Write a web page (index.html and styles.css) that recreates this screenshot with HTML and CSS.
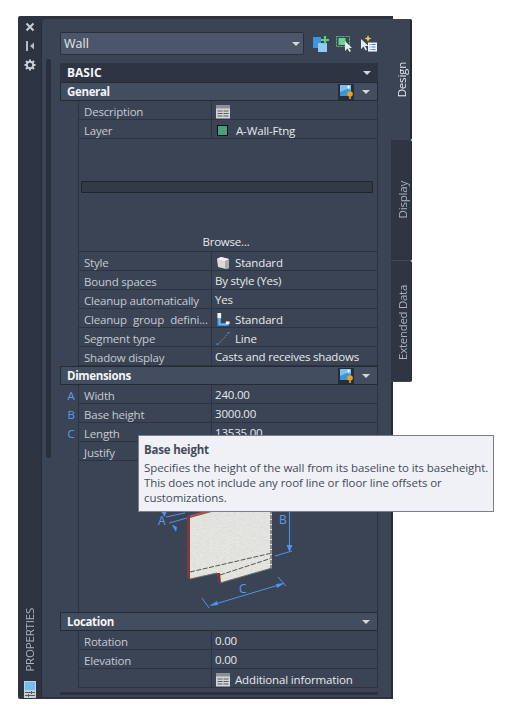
FILE: index.html
```html
<!DOCTYPE html>
<html lang="en">
<head>
  <meta charset="UTF-8" />
  <title>Properties</title>
  <link rel="stylesheet" href="styles.css">
</head>
<body>
  <div class="window">
    <div class="palette">
      <div class="titlebar">
        <svg class="tool" viewBox="0 0 12 12"><path d="M2.500 2.500l7 7M9.500 2.500l-7 7" stroke="#c9ced5" stroke-width="2"/></svg>
        <svg class="tool" viewBox="0 0 12 12"><path d="M3 1v10" stroke="#b4bbc5" stroke-width="2"/><path d="M10 2.500v7l-4-3.500z" fill="#b4bbc5"/></svg>
        <svg class="tool" viewBox="0 0 12 12"><circle cx="6" cy="6" r="3.200" fill="none" stroke="#c9ced5" stroke-width="2"/><path d="M6 .5v2M6 9.500v2M.5 6h2M9.500 6h2M2 2l1.500 1.500M10 2L8.500 3.500M2 10l1.500-1.500M10 10L8.500 8.500" stroke="#c9ced5" stroke-width="2"/></svg>
        <div class="title-name">PROPERTIES</div>
        <svg class="palette-icon" viewBox="0 0 12 17">
          <rect width="12" height="17" fill="#c9ced4"/>
          <rect x="1" y="1" width="10" height="8" fill="#6cc0f5"/>
          <path d="M1 11.500h10M1 14.500h10" stroke="#555c66"/>
          <path d="M7.500 10v3M4.500 13v3" stroke="#555c66"/>
        </svg>
      </div>

      <div class="panel">
        <div class="scrollbar-v"></div>
        <div class="content">
          <div class="toolbar">
            <div class="combo">
              <span>Wall</span>
              <i class="arrow"></i>
            </div>
            <div class="toolbar-icons">
              <svg width="18" height="18" viewBox="0 0 18 18">
                <rect x="1" y="2" width="8" height="11" fill="#3f94dc"/>
                <rect x="6" y="8" width="9" height="9" fill="#90caf6"/>
                <path d="M13 1v8M9 5h8" stroke="#5bd07e" stroke-width="2.200"/>
              </svg>
              <svg width="18" height="18" viewBox="0 0 18 18">
                <rect x=".5" y="1.500" width="13" height="10" fill="none" stroke="#52c878" stroke-dasharray="2 1"/>
                <rect x="2.500" y="3" width="7" height="7" fill="#6ed093"/>
                <path d="M9 6v10l2.500-2.500 2 3.500 1.500-1-2-3h3z" fill="#e8ebee"/>
              </svg>
              <svg width="18" height="18" viewBox="0 0 18 18">
                <path d="M1 4v10l2.500-2.500 2 4 1.500-1-2-3.500h3.500z" fill="#e8ebee"/>
                <path d="M8 0l1 2.500 2.500 1-2.500 1-1 2.500-1-2.500-2.500-1 2.500-1z" fill="#f4c35c"/>
                <rect x="8" y="7.500" width="9" height="9" fill="#f2f4f6"/>
                <path d="M9.500 9.500h1M9.500 12h1M9.500 14.500h1M11.500 9.500h4M11.500 12h4M11.500 14.500h4" stroke="#2f86d4"/>
              </svg>
            </div>
          </div>

          <div class="group-head">BASIC<i class="arrow"></i></div>
          <div class="section-head">
            General
            <svg class="qs" viewBox="0 0 16 16"><rect width="16" height="16" fill="#282e39"/><rect x="2" y="1" width="11" height="11" fill="#3d92d8"/><path d="M2 1h11v5l-4-1-7 3z" fill="#7cc0f0"/><path d="M9 3h3M10.500 1.500v3" stroke="#fff"/><circle cx="12" cy="10" r="2.800" fill="#f0a020"/><rect x="11" y="12" width="2" height="3" fill="#c98a20"/></svg>
            <i class="arrow"></i>
          </div>
          <div class="row">
            <span class="gutter"></span><span class="label">Description</span>
            <span class="value">
              <svg class="cell-icon" viewBox="0 0 14 13"><rect width="14" height="13" fill="#d3d5d6"/><rect width="14" height="3" fill="#8d9196"/><path d="M1.500 5.500h5M7.500 5.500h5M1.500 8h5M7.500 8h5M1.500 10.500h5M7.500 10.500h5" stroke="#555a61"/></svg>
            </span>
          </div>
          <div class="row">
            <span class="gutter"></span><span class="label">Layer</span>
            <span class="value"><i class="swatch"></i>A-Wall-Ftng</span>
          </div>
          <div class="row graphic-row">
            <span class="gutter"></span>
            <div class="graphic-cell">
              <div class="graphic-bar"></div>
              <div class="browse">Browse...</div>
            </div>
          </div>
          <div class="row">
            <span class="gutter"></span><span class="label">Style</span>
            <span class="value">
              <svg class="cell-icon" viewBox="0 0 14 14"><path d="M1 3l4-2 8 2v9l-3 1-8-2z" fill="#d9dad8"/><path d="M1 3l8 2 4-2-8-2z" fill="#f2f2f0"/><path d="M9 5v8l4-1V3z" fill="#a9acae"/></svg>
              Standard
            </span>
          </div>
          <div class="row">
            <span class="gutter"></span><span class="label">Bound spaces</span>
            <span class="value plain">By style (Yes)</span>
          </div>
          <div class="row">
            <span class="gutter"></span><span class="label">Cleanup automatically</span>
            <span class="value plain">Yes</span>
          </div>
          <div class="row">
            <span class="gutter"></span><span class="label label-wide">Cleanup group defini...</span>
            <span class="value">
              <svg class="cell-icon" viewBox="0 0 14 15"><rect x="1" y="0" width="4" height="6" fill="#f2f4f6"/><path d="M1 6h4v5h8v3H1z" fill="#3b94de"/><path d="M3 6v6h9" stroke="#8cc8f4" fill="none"/><rect x="10" y="9" width="4" height="3" fill="#f2f4f6"/></svg>
              Standard
            </span>
          </div>
          <div class="row">
            <span class="gutter"></span><span class="label">Segment type</span>
            <span class="value">
              <svg class="cell-icon" viewBox="0 0 14 15"><path d="M1.500 13.500l11-12" stroke="#7d8794" stroke-dasharray="2 1"/><rect y="12" width="2" height="2" fill="#2e86de"/><rect x="12" y="0" width="2" height="2" fill="#2e86de"/></svg>
              Line
            </span>
          </div>
          <div class="row">
            <span class="gutter"></span><span class="label">Shadow display</span>
            <span class="value plain">Casts and receives shadows</span>
          </div>

          <div class="section-head">
            Dimensions
            <svg class="qs" viewBox="0 0 16 16"><rect width="16" height="16" fill="#282e39"/><rect x="2" y="1" width="11" height="11" fill="#3d92d8"/><path d="M2 1h11v5l-4-1-7 3z" fill="#7cc0f0"/><path d="M9 3h3M10.500 1.500v3" stroke="#fff"/><circle cx="12" cy="10" r="2.800" fill="#f0a020"/><rect x="11" y="12" width="2" height="3" fill="#c98a20"/></svg>
            <i class="arrow"></i>
          </div>
          <div class="row">
            <span class="gutter">A</span><span class="label">Width</span>
            <span class="value plain">240.00</span>
          </div>
          <div class="row">
            <span class="gutter">B</span><span class="label">Base height</span>
            <span class="value plain">3000.00</span>
          </div>
          <div class="row">
            <span class="gutter">C</span><span class="label">Length</span>
            <span class="value plain">13535.00</span>
          </div>
          <div class="row">
            <span class="gutter"></span><span class="label">Justify</span>
            <span class="value plain"></span>
          </div>
          <div class="row picture-row">
            <span class="gutter"></span>
            <svg class="wall-picture" width="299" height="151" viewBox="78 461 299 151">
              <defs>
                <filter id="grain" x="0" y="0" width="100%" height="100%">
                  <feTurbulence type="fractalNoise" baseFrequency="0.3 0.7" numOctaves="2" seed="4"/>
                  <feColorMatrix values="0 0 0 0 .6  0 0 0 0 .61  0 0 0 0 .58  .8 0 0 0 -.25"/>
                  <feComposite in2="SourceGraphic" operator="in"/>
                  <feMerge><feMergeNode in="SourceGraphic"/><feMergeNode/></feMerge>
                </filter>
              </defs>
              <path d="M188 516l20-6 64-17-2 2-80 23z" fill="#a8504e"/>
              <path d="M187 516h3v63l-3-1z" fill="#7d3b39"/>
              <path d="M190 518l82-23v73l-52 15-3-10-27 6z" fill="#e6e7e1" filter="url(#grain)"/>
              <path d="M190 572l82-19M220 575l52-17" stroke="#55574f" stroke-dasharray="5 1.500" fill="none"/>
              <path d="M190 579l27-6M220 583l52-15" stroke="#6d6f68"/>
              <path d="M217 573l1 10h3l-1-10z" fill="#6b3a38"/>
              <path d="M271 495v73" stroke="#8a8c85" stroke-width="2" stroke-dasharray="4 1"/>
              <g stroke="#4f93ea" fill="none">
                <path d="M289.500 505v45M275 556l17-5"/>
                <path d="M212 605l70-21M202 598l7 10M278 577l8 9"/>
                <path d="M166 517l19-4M169 523l18-5M164 508v6M173 525l3 5"/>
              </g>
              <g fill="#4f93ea">
                <path d="M286.500 545h6l-3 7z"/>
                <path d="M209 606l8-5 1 4zM285 583l-8 5-1-4z"/>
                <path d="M161.500 512h5l-2 5zM172 525l5 2-1 5z"/>
              </g>
              <g class="dim-text">
                <text x="279" y="524">B</text>
                <text x="239" y="593">C</text>
                <text x="158" y="525">A</text>
              </g>
            </svg>
          </div>

          <div class="section-head">Location<i class="arrow"></i></div>
          <div class="row">
            <span class="gutter"></span><span class="label">Rotation</span>
            <span class="value plain">0.00</span>
          </div>
          <div class="row">
            <span class="gutter"></span><span class="label">Elevation</span>
            <span class="value plain">0.00</span>
          </div>
          <div class="row">
            <span class="gutter"></span><span class="label"></span>
            <span class="value">
              <svg class="cell-icon" viewBox="0 0 14 13"><rect width="14" height="13" fill="#d3d5d6"/><rect width="14" height="3" fill="#8d9196"/><path d="M1.500 5.500h5M7.500 5.500h5M1.500 8h5M7.500 8h5M1.500 10.500h5M7.500 10.500h5" stroke="#555a61"/></svg>
              Additional information
            </span>
          </div>
          <div class="scrollbar-h"></div>
        </div>
      </div>
    </div>

    <div class="tabs">
      <div class="tab-cap"></div>
      <div class="tab tab-active"><span>Design</span></div>
      <div class="tab tab-display"><span>Display</span></div>
      <div class="tab tab-extended"><span>Extended Data</span></div>
      <div class="tab-edge"></div>
    </div>

    <div class="tooltip">
      <h4>Base height</h4>
      <p>Specifies the height of the wall from its baseline to its baseheight.<br>This does not include any roof line or floor line offsets or<br>customizations.</p>
    </div>
  </div>
</body>
</html>
```

FILE: styles.css
```css
body {
  margin: 0;
  background: #fff;
  font-family: "Open Sans", "Noto Sans", sans-serif;
  font-size: 11.5px;
  letter-spacing: -0.2px;
  color: #e6e9ee;
}

.window {
  position: relative;
  display: flex;
  width: 394px;
  height: 683px;
  margin: 16px 0 0 18px;
}

/* Palette frame */
.palette {
  display: flex;
  width: 373px;
  background: #2d3340;
  border-radius: 2px 0 0 2px;
}

.titlebar {
  display: flex;
  flex-direction: column;
  align-items: center;
  width: 23px;
  padding-top: 5px;
  box-sizing: border-box;
}

.tool {
  width: 12px;
  height: 12px;
  margin-bottom: 7px;
}

.title-name {
  margin-top: auto;
  writing-mode: vertical-rl;
  transform: rotate(180deg);
  color: #aab3be;
  font-size: 11.5px;
  line-height: 14px;
}

.palette-icon {
  width: 12px;
  height: 17px;
  margin-top: 9px;
  margin-bottom: 1px;
}

.panel {
  display: flex;
  width: 350px;
  margin: 3px 0 2px;
  background: #3b4454;
  border-left: 1px solid #272d38;
  border-radius: 4px 0 0 2px;
  box-sizing: border-box;
}

.scrollbar-v {
  width: 5px;
  height: 399px;
  margin: 40px 0 0 4px;
  background: #29303b;
  border-radius: 2px;
}

.content {
  width: 318px;
  margin-left: 9px;
  padding-top: 13px;
}

/* Top combo and buttons */
.toolbar {
  display: flex;
  align-items: center;
  height: 23px;
  margin-bottom: 8px;
}

.combo {
  display: flex;
  align-items: center;
  justify-content: space-between;
  width: 245px;
  height: 23px;
  padding: 0 3px 0 3px;
  box-sizing: border-box;
  background: #4b566a;
  border: 1px solid #29303b;
  border-radius: 2px;
  color: #e6e9ee;
  font-size: 12.5px;
  letter-spacing: 0;
}

.toolbar-icons {
  display: flex;
  gap: 6px;
  margin-left: 8px;
}

.arrow {
  display: block;
  width: 0;
  height: 0;
  border-left: 4px solid transparent;
  border-right: 4px solid transparent;
  border-top: 4px solid #d3d6da;
}

/* Section headers */
.group-head, .section-head {
  display: flex;
  align-items: center;
  height: 19px;
  padding: 0 7px;
  box-sizing: border-box;
  font-weight: 700;
  font-size: 12px;
  letter-spacing: 0;
  color: #f2f4f7;
}

.group-head {
  background: #2e3442;
}

.section-head {
  background: #434d60;
  border: 1px solid #252b35;
  padding-left: 6px;
  font-size: 11.5px;
  letter-spacing: -0.35px;
}

.group-head .arrow, .section-head .arrow {
  margin-left: auto;
}

.qs {
  width: 16px;
  height: 16px;
  margin-left: auto;
  margin-right: 8px;
}

.qs + .arrow {
  margin-left: 0;
}

/* Property rows */
.row {
  display: grid;
  grid-template-columns: 18px 134px 166px;
  grid-template-rows: 19px;
  height: 19px;
  line-height: 22px;
}

.gutter {
  padding-left: 4px;
  box-sizing: border-box;
  text-align: center;
  color: #5a9cf0;
  font-size: 11.5px;
  border-right: 1px solid #2d3440;
  margin-right: -1px;
}

.label, .value {
  box-sizing: border-box;
  height: 19px;
  border-bottom: 1px solid #2d3440;
  white-space: nowrap;
}

.label {
  padding-left: 6px;
  color: #c3cad4;
  border-right: 1px solid #2d3440;
}

.label-wide {
  word-spacing: 3.5px;
}

.value {
  display: flex;
  align-items: center;
  padding-left: 4px;
  padding-top: 3px;
  line-height: 18px;
  letter-spacing: -0.15px;
  border-right: 1px solid #2d3440;
}

.plain {
  padding-left: 3px;
  padding-top: 2px;
  letter-spacing: -0.2px;
}

.cell-icon {
  width: 14px;
  height: 14px;
  margin-right: 5px;
}

.swatch {
  display: block;
  width: 9px;
  height: 9px;
  margin: 0 8px 0 1px;
  background: #4c9f7c;
  border: 1px solid #0d0f12;
}

.graphic-row {
  grid-template-columns: 18px 300px;
  grid-template-rows: 113px;
  height: 113px;
}

.graphic-cell {
  display: flex;
  flex-direction: column;
  align-items: center;
  box-sizing: border-box;
  height: 113px;
  line-height: 18px;
  border-bottom: 1px solid #2d3440;
  border-right: 1px solid #2d3440;
  padding-top: 42px;
}

.graphic-bar {
  width: 292px;
  height: 13px;
  margin-right: 2px;
  box-sizing: border-box;
  background: #323a48;
  border: 1px solid #1f242c;
  border-radius: 1px;
}

.browse {
  margin-top: 40px;
  margin-right: 3px;
}

.picture-row {
  grid-template-columns: 18px 300px;
  grid-template-rows: 151px;
  height: 151px;
}

.wall-picture {
  display: block;
  border-right: 1px solid #2d3440;
}

.dim-text {
  fill: #5a9cf0;
  font-size: 12px;
}

.scrollbar-h {
  height: 3px;
  margin-top: 4px;
  background: #2b313d;
}

/* Side tabs */
.tabs {
  display: flex;
  flex-direction: column;
  width: 21px;
}

.tab-cap {
  width: 2px;
  height: 3px;
  background: #2d3340;
}

.tab {
  display: flex;
  align-items: flex-start;
  justify-content: center;
  height: 121px;
  box-sizing: border-box;
  background: #2f3543;
  color: #aab3be;
  border-right: 1px solid #252b35;
  border-bottom: 1px solid #3f4756;
  border-radius: 0 2px 2px 0;
  padding-left: 3px;
}

.tab span {
  writing-mode: vertical-rl;
  transform: rotate(180deg);
  line-height: 14px;
}

.tab-active {
  background: #3b4454;
  color: #e6e9ee;
  border-right: 2px solid #252b35;
  border-bottom: 0;
}

.tab-active span {
  margin-top: 43px;
}

.tab-display span {
  margin-top: 41px;
}

.tab-extended span {
  margin-top: 24px;
  letter-spacing: -0.3px;
}

.tab-edge {
  flex: 1;
  width: 2px;
  background: #252b35;
}

/* Tooltip */
.tooltip {
  position: absolute;
  left: 120px;
  top: 419px;
  width: 356px;
  height: 77px;
  padding: 5px 5px;
  box-sizing: border-box;
  background: #eff1f7;
  border: 1px solid #7b7f87;
  color: #444b58;
  line-height: 15px;
  letter-spacing: -0.08px;
  white-space: nowrap;
}

.tooltip h4 {
  margin: 0 0 1px;
  font-size: 11.5px;
  font-weight: 700;
  line-height: 18px;
  letter-spacing: -0.2px;
}

.tooltip p {
  margin: 0;
}
```
